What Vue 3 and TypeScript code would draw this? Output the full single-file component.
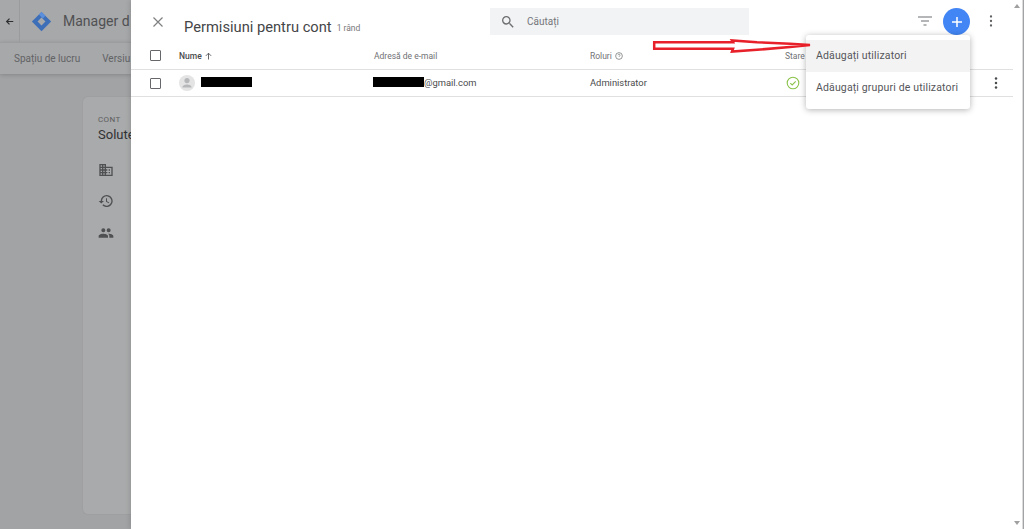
<script setup lang="ts">
const tabs: string[] = ['Spațiu de lucru', 'Versiu']
</script>

<template>
  <div class="page">
    <div class="behind">
      <header class="top">
        <div class="back">
          <svg width="9" height="9" viewBox="0 0 12 12"><path d="M11 6H2.5M6 2.2 2.2 6 6 9.8" fill="none" stroke="#2d2e30" stroke-width="1.6"/></svg>
        </div>
        <svg class="logo" width="21" height="21" viewBox="0 0 24 24">
          <path d="M12 1 23 12 12 23 1 12Z" fill="#3d6fb8"/>
          <path d="M12 7.5 16.5 12 12 16.5 7.5 12Z" fill="#a7a8aa"/>
          <path d="M9 4 12 1 16.5 5.5 13.5 8.5Z" fill="#5b8edb"/>
        </svg>
        <span class="product">Manager d</span>
      </header>
      <nav class="tabs">
        <span v-for="t in tabs" :key="t">{{ t }}</span>
      </nav>
      <div class="card">
        <div class="eyebrow">CONT</div>
        <div class="name">Solute</div>
        <div class="line">
          <svg width="16" height="16" viewBox="0 0 24 24"><path fill="#4f5052" d="M12 7V3H2v18h20V7H12zM6 19H4v-2h2v2zm0-4H4v-2h2v2zm0-4H4V9h2v2zm0-4H4V5h2v2zm4 12H8v-2h2v2zm0-4H8v-2h2v2zm0-4H8V9h2v2zm0-4H8V5h2v2zm10 12h-8v-2h2v-2h-2v-2h2v-2h-2V9h8v10zm-2-8h-2v2h2v-2zm0 4h-2v2h2v-2z"/></svg>
        </div>
        <div class="line">
          <svg width="16" height="16" viewBox="0 0 24 24"><path fill="#4f5052" d="M13 3a9 9 0 0 0-9 9H1l3.9 3.9L9 12H6a7 7 0 1 1 2.05 4.95l-1.42 1.42A9 9 0 1 0 13 3zm-1 5v5l4.28 2.54.72-1.21-3.5-2.08V8H12z"/></svg>
        </div>
        <div class="line">
          <svg width="16" height="16" viewBox="0 0 24 24"><path fill="#4f5052" d="M16 11a3 3 0 1 0 0-6 3 3 0 0 0 0 6zm-8 0a3 3 0 1 0 0-6 3 3 0 0 0 0 6zm0 2c-2.33 0-7 1.17-7 3.5V19h14v-2.5C15 14.17 10.33 13 8 13zm8 0c-.29 0-.62.02-.97.05C16.19 13.89 17 15.02 17 16.5V19h6v-2.5c0-2.33-4.67-3.5-7-3.5z"/></svg>
        </div>
      </div>
    </div>

    <main class="panel">
      <div class="head">
        <svg class="close" width="10" height="10" viewBox="0 0 10 10"><path d="M.5.5l9 9M9.5.5l-9 9" stroke="#7e7f81" stroke-width="1.2" fill="none"/></svg>
        <h1>Permisiuni pentru cont</h1>
        <span class="count">1 rând</span>
        <div class="search">
          <svg width="16" height="16" viewBox="0 0 24 24"><path fill="#6d6e70" d="M15.5 14h-.79l-.28-.27A6.47 6.47 0 0 0 16 9.5 6.5 6.5 0 1 0 9.5 16c1.61 0 3.09-.59 4.23-1.57l.27.28v.79l5 4.99L20.49 19l-4.99-5zm-6 0C7.01 14 5 11.99 5 9.5S7.01 5 9.5 5 14 7.01 14 9.5 11.99 14 9.5 14z"/></svg>
          <span>Căutați</span>
        </div>
        <svg class="filter" width="14" height="10" viewBox="0 0 14 10"><path d="M0 1h14M3 5h8M5.5 9h3" stroke="#6d6e70" stroke-width="1.2" fill="none"/></svg>
        <div class="fab">
          <svg width="12" height="12" viewBox="0 0 12 12"><path d="M6 1v10M1 6h10" stroke="#fff" stroke-width="1.5"/></svg>
        </div>
        <svg class="dots dots-top" width="4" height="12" viewBox="0 0 4 12"><circle cx="2" cy="1.5" r="1.15"/><circle cx="2" cy="6" r="1.15"/><circle cx="2" cy="10.5" r="1.15"/></svg>
      </div>

      <div class="row row-head">
        <span class="box"></span>
        <div class="col-name nume">Nume
          <svg width="7" height="8" viewBox="0 0 10 10"><path d="M5 10V1M1.2 4.8 5 1l3.8 3.8" fill="none" stroke="#55565a" stroke-width="1.3"/></svg>
        </div>
        <div class="col-mail">Adresă de e-mail</div>
        <div class="col-role">Roluri
          <svg width="8" height="8" viewBox="0 0 10 10"><circle cx="5" cy="5" r="4.2" fill="none" stroke="#7b7c7e"/><path d="M3.6 4c.2-1.6 2.8-1.6 2.8 0 0 1-1.4 1-1.4 2.1" fill="none" stroke="#7b7c7e" stroke-width=".9"/></svg>
        </div>
        <div class="col-state">Stare</div>
      </div>

      <div class="row row-data">
        <span class="box"></span>
        <div class="col-name">
          <span class="avatar">
            <svg width="16" height="16" viewBox="0 0 16 16"><circle cx="8" cy="5.6" r="2.6" fill="#b6b7b9"/><path d="M3.4 12.4c0-2.2 3-3 4.6-3s4.6.8 4.6 3z" fill="#b6b7b9"/></svg>
          </span>
          <span class="redact redact-name"></span>
        </div>
        <div class="col-mail mail"><span class="redact redact-mail"></span><span>@gmail.com</span></div>
        <div class="col-role role">Administrator</div>
        <div class="col-state state-icon">
          <svg width="14" height="14" viewBox="0 0 14 14"><circle cx="7" cy="7" r="5.8" fill="none" stroke="#8bc34a" stroke-width="1.1"/><path d="M4.3 7.2 6.2 9l3.5-3.6" fill="none" stroke="#8bc34a" stroke-width="1.1"/></svg>
        </div>
        <svg class="dots dots-row" width="4" height="12" viewBox="0 0 4 12"><circle cx="2" cy="1.5" r="1.25"/><circle cx="2" cy="6" r="1.25"/><circle cx="2" cy="10.5" r="1.25"/></svg>
      </div>

      <div class="menu">
        <div class="item active">Adăugați utilizatori</div>
        <div class="item">Adăugați grupuri de utilizatori</div>
      </div>

      <svg class="arrow" width="164" height="18" viewBox="0 0 164 18">
        <path d="M2.2 5.2H81L80 3.5 105 5.3 138 6.8 158 8 138 10 105 12.8 80 14.5 81 11.8H2.2Z" fill="#fff" stroke="#e8202a" stroke-width="2.5"/>
      </svg>
    </main>

    <aside class="scrollbar">
      <span class="up"></span>
      <span class="down"></span>
    </aside>
  </div>
</template>

<style>
html, body { margin: 0; padding: 0; background: #a2a3a5; overflow: hidden; }
</style>

<style scoped>
.page {
  width: 1024px;
  height: 529px;
  display: flex;
  overflow: hidden;
  font-family: Roboto, "Liberation Sans", sans-serif;
  color: #3c3d40;
  background: #a2a3a5;
}
.behind {
  width: 131px;
  flex: none;
  overflow: hidden;
}
.behind > * { width: 131px; box-sizing: border-box; }
.top {
  height: 42px;
  display: flex;
  align-items: center;
  background: #a7a8aa;
}
.back {
  width: 19px;
  height: 42px;
  display: flex;
  align-items: center;
  justify-content: center;
  border-right: 1px solid #9a9b9d;
  flex: none;
}
.logo { margin-left: 11px; flex: none; }
.product { margin-left: 11px; font-size: 14px; color: #505153; white-space: nowrap; }
.tabs {
  height: 32px;
  display: flex;
  align-items: center;
  gap: 22px;
  padding-left: 14px;
  font-size: 10px;
  color: #626365;
  background: #a7a8aa;
  border-top: 1px solid #9c9d9f;
  box-shadow: 0 1px 4px rgba(0, 0, 0, .18);
  white-space: nowrap;
}
.card {
  margin: 22px 0 0 82px;
  width: 60px !important;
  height: 419px;
  padding: 18px 0 0 15px;
  background: #a9aaab;
  border: 1px solid #9f9fa1;
  border-right: 0;
  border-radius: 6px 0 0 6px;
}
.eyebrow { font-size: 8px; letter-spacing: .4px; color: #5c5d5f; }
.name { font-size: 13px; color: #313234; margin-top: 3px; margin-bottom: 12px; white-space: nowrap; }
.line { height: 31.5px; display: flex; align-items: center; }
.panel {
  position: relative;
  flex: none;
  width: 882px;
  height: 529px;
  background: #fff;
  box-shadow: -1px 0 5px rgba(0, 0, 0, .14);
}
.head {
  height: 42px;
  display: flex;
  align-items: center;
  box-sizing: border-box;
  padding-left: 22px;
  position: relative;
}
.close { flex: none; margin-top: 1px; }
h1 {
  margin: 11px 0 0 21px;
  font-size: 14.7px;
  font-weight: 400;
  color: #444547;
  white-space: nowrap;
}
.count { margin: 13px 0 0 5px; font-size: 8.5px; color: #77787a; white-space: nowrap; }
.search {
  position: absolute;
  left: 359px;
  top: 8px;
  width: 259px;
  height: 27px;
  background: #f1f3f4;
  display: flex;
  align-items: center;
  box-sizing: border-box;
  padding-left: 10px;
  gap: 11px;
  font-size: 10px;
  color: #75767a;
}
.filter { position: absolute; left: 787px; top: 16px; }
.fab {
  position: absolute;
  left: 812px;
  top: 8px;
  width: 27px;
  height: 27px;
  border-radius: 50%;
  background: #4285f4;
  display: flex;
  align-items: center;
  justify-content: center;
}
.dots { fill: #5f6062; }
.dots-top { position: absolute; left: 858px; top: 15px; }
.row {
  display: flex;
  align-items: center;
  box-sizing: border-box;
  border-bottom: 1px solid #e0e0e0;
  position: relative;
  padding-left: 19px;
}
.row-head { height: 28px; font-size: 8.5px; color: #707174; }
.row-data { height: 27px; padding-bottom: 2px; font-size: 9.4px; color: #4a4b4d; }
.row-data .box { margin-top: 2px; }
.box {
  width: 9px;
  height: 9px;
  border: 1px solid #66676a;
  border-radius: 1px;
  flex: none;
}
.col-name { margin-left: 18px; width: 195px; display: flex; align-items: center; flex: none; }
.nume { color: #4a4b4d; font-weight: 500; gap: 3px; }
.col-mail { width: 216px; flex: none; }
.col-role { width: 195px; flex: none; display: flex; align-items: center; gap: 3px; }
.col-state { flex: none; display: flex; align-items: center; }
.state-icon { margin: 2px 0 0 1px; }
.avatar {
  width: 16px;
  height: 16px;
  border-radius: 50%;
  background: #e4e4e5;
  flex: none;
  margin-top: 2px;
}
.avatar svg { display: block; }
.redact { display: inline-block; background: #000; height: 10px; }
.redact-name { width: 51px; margin-left: 6px; }
.redact-mail { width: 51px; margin-left: -1px; }
.mail { display: flex; align-items: center; }
.dots-row { position: absolute; left: 863px; top: 7px; fill: #4a4b4d; }
.menu {
  position: absolute;
  left: 675px;
  top: 35px;
  width: 164px;
  height: 74px;
  box-sizing: border-box;
  padding-top: 5px;
  background: #fff;
  border-radius: 3px;
  box-shadow: 0 1px 6px rgba(0, 0, 0, .3);
}
.item {
  height: 32px;
  display: flex;
  align-items: center;
  padding: 0 0 2px 10px;
  box-sizing: border-box;
  font-size: 10.5px;
  letter-spacing: .15px;
  color: #55565a;
  white-space: nowrap;
}
.active { background: #f3f3f3; }
.arrow { position: absolute; left: 521px; top: 37px; }
.scrollbar {
  flex: none;
  width: 9px;
  height: 529px;
  background: #fff;
  border-right: 1px solid #dcdcdc;
  margin-right: 1px;
  position: relative;
}
.up {
  position: absolute;
  left: 1px;
  top: 4px;
  border: 3px solid transparent;
  border-top-width: 0;
  border-bottom: 4px solid #a0a0a0;
}
.down {
  position: absolute;
  left: 1px;
  bottom: 4px;
  border: 3px solid transparent;
  border-bottom-width: 0;
  border-top: 4px solid #a0a0a0;
}
</style>
